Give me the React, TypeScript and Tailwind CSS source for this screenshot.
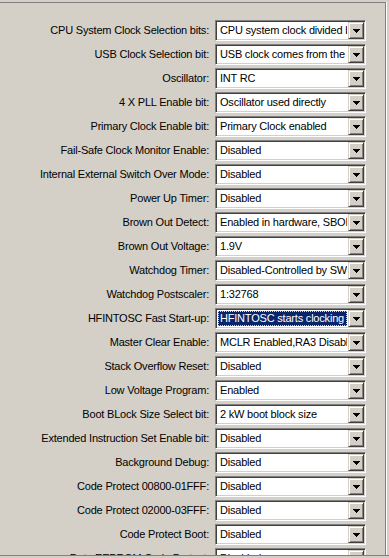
import React from 'react';

const rows = [
    { label: 'CPU System Clock Selection bits:', value: 'CPU system clock divided by 2' },
    { label: 'USB Clock Selection bit:', value: 'USB clock comes from the OSC1/OSC2' },
    { label: 'Oscillator:', value: 'INT RC' },
    { label: '4 X PLL Enable bit:', value: 'Oscillator used directly' },
    { label: 'Primary Clock Enable bit:', value: 'Primary Clock enabled' },
    { label: 'Fail-Safe Clock Monitor Enable:', value: 'Disabled' },
    { label: 'Internal External Switch Over Mode:', value: 'Disabled' },
    { label: 'Power Up Timer:', value: 'Disabled' },
    { label: 'Brown Out Detect:', value: 'Enabled in hardware, SBOREN disabled' },
    { label: 'Brown Out Voltage:', value: '1.9V' },
    { label: 'Watchdog Timer:', value: 'Disabled-Controlled by SWDTEN bit' },
    { label: 'Watchdog Postscaler:', value: '1:32768' },
    { label: 'HFINTOSC Fast Start-up:', value: 'HFINTOSC starts clocking CPU without waiting', selected: true },
    { label: 'Master Clear Enable:', value: 'MCLR Enabled,RA3 Disabled' },
    { label: 'Stack Overflow Reset:', value: 'Disabled' },
    { label: 'Low Voltage Program:', value: 'Enabled' },
    { label: 'Boot BLock Size Select bit:', value: '2 kW boot block size' },
    { label: 'Extended Instruction Set Enable bit:', value: 'Disabled' },
    { label: 'Background Debug:', value: 'Disabled' },
    { label: 'Code Protect 00800-01FFF:', value: 'Disabled' },
    { label: 'Code Protect 02000-03FFF:', value: 'Disabled' },
    { label: 'Code Protect Boot:', value: 'Disabled' },
    { label: 'Data EEPROM Code Protect:', value: 'Disabled' },
];

function Combo({ value, selected }: { value: string; selected?: boolean }) {
    return (
        <div className="flex w-[151px] h-[21px] shrink-0 border border-t-[#808080] border-l-[#808080] border-b-white border-r-white shadow-[inset_1px_1px_0_#404040,inset_-1px_-1px_0_#d4d0c8] p-[1px]">
            <div className="flex-1 min-w-0 bg-white overflow-hidden p-[1px]">
                {selected ? (
                    <div className="h-full bg-[#0a246a] text-white border border-dotted border-[#d8d8b0] pl-[1px] leading-[13px] whitespace-nowrap overflow-hidden">
                        {value}
                    </div>
                ) : (
                    <div className="h-full pl-[2px] leading-[15px] whitespace-nowrap overflow-hidden text-black">{value}</div>
                )}
            </div>
            <div className="w-[16px] h-full shrink-0 bg-[#d4d0c8] border border-t-[#d4d0c8] border-l-[#d4d0c8] border-b-[#404040] border-r-[#404040] shadow-[inset_1px_1px_0_#ffffff,inset_-1px_-1px_0_#808080] flex items-center justify-center">
                <svg width="7" height="4" viewBox="0 0 7 4" className="block">
                    <path d="M0 0h7L3.5 4z" fill="#000" shapeRendering="crispEdges" />
                </svg>
            </div>
        </div>
    );
}

export default function App() {
    return (
        <div className="w-[389px] h-[558px] bg-[#d4d0c8] flex flex-col overflow-hidden font-['Liberation_Sans',Arial,sans-serif] text-[11px] tracking-[-0.2px] text-black">
            <div className="h-[2px] shrink-0" />
            <div className="flex-1 min-h-0 w-[386px] border-t border-r border-t-[#808080] border-r-[#808080] shadow-[1px_0_0_#ffffff] overflow-hidden">
                <div className="flex flex-col gap-[3px] pt-[17px]">
                    {rows.map((row) => (
                        <div key={row.label} className="flex items-center">
                            <div className="w-[209px] shrink-0 text-right whitespace-nowrap">{row.label}</div>
                            <div className="ml-[6px]">
                                <Combo value={row.value} selected={row.selected} />
                            </div>
                        </div>
                    ))}
                </div>
            </div>
            <div className="h-[3px] shrink-0 border-t border-t-[#808080] bg-[#d4d0c8]" />
        </div>
    );
}
